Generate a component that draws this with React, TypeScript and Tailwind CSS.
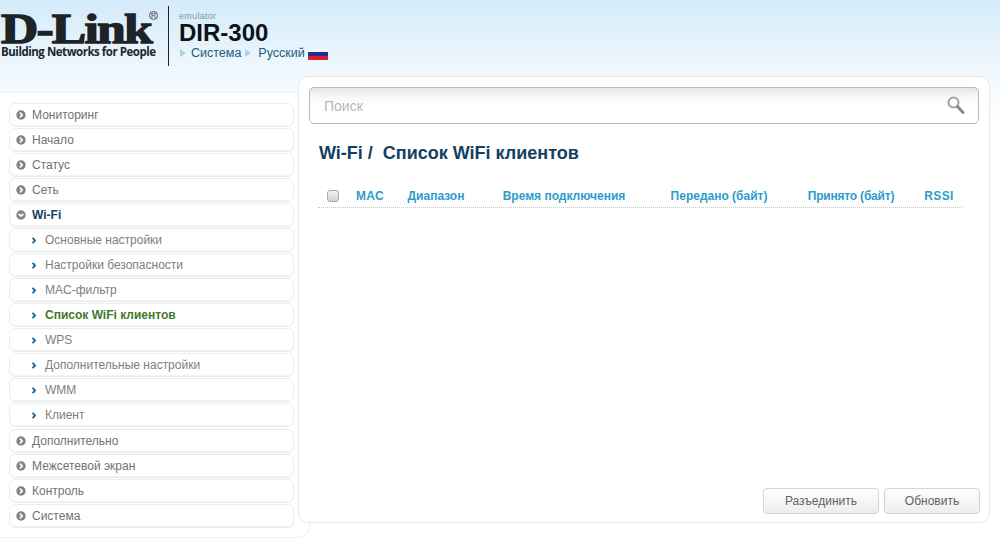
import React from "react";

const font = { fontFamily: '"Liberation Sans", Arial, sans-serif' };

function TopIcon({ open }: { open?: boolean }) {
  return (
    <svg width="10" height="10" viewBox="0 0 10 10" className="shrink-0">
      <circle cx="5" cy="5" r="4.7" fill="#7f8585" />
      <path d={open ? "M2.6 3.9 L5 6.2 L7.4 3.9" : "M3.9 2.6 L6.2 5 L3.9 7.4"} fill="none" stroke="#fff" strokeWidth="1.6" />
    </svg>
  );
}

function SubIcon() {
  return (
    <svg width="5" height="7" viewBox="0 0 5 7" className="shrink-0">
      <path d="M0.5 0.8 L3 3.5 L0.5 6.2" fill="none" stroke="#0d5f92" strokeWidth="1.8" />
    </svg>
  );
}

const rowBase =
  "flex h-[24px] w-[285px] shrink-0 items-center rounded-[6px] border border-[#ebeeee] bg-white text-[12px] shadow-[inset_0_-1px_0_#f3f4f4]";

function Top({ label, open, className = "" }: { label: string; open?: boolean; className?: string }) {
  return (
    <div className={`${rowBase} gap-[6px] pl-[6px] ${className}`}>
      <TopIcon open={open} />
      <span className={open ? "font-bold text-[#123f61]" : "text-[#6f7373]"}>{label}</span>
    </div>
  );
}

function Sub({ label, active }: { label: string; active?: boolean }) {
  return (
    <div className={`${rowBase} gap-[8px] pl-[22px]`}>
      <SubIcon />
      <span className={active ? "font-bold text-[#3f7a2a]" : "text-[#7b7f7f]"}>{label}</span>
    </div>
  );
}

function Th({ w, children }: { w: string; children: React.ReactNode }) {
  return <div className={`${w} shrink-0 text-center`}>{children}</div>;
}

export default function App() {
  return (
    <div
      className="h-[539px] w-[1000px] overflow-hidden bg-[linear-gradient(to_bottom,#d3ebf9_0px,#e4f2fb_40px,#f1f8fd_75px,#ffffff_125px)]"
      style={font}
    >
      <header className="flex h-[76px] items-start">
        <div className="ml-[1px] mt-[9px] w-[167px]">
          <div className="relative h-[36px] leading-[40px]">
            <span
              className="inline-block origin-left scale-x-[1.2] text-[43px] font-bold tracking-[-1.5px] text-[#1d2326] [-webkit-text-stroke:1.4px_#1d2326]"
              style={{ fontFamily: '"Liberation Serif", serif' }}
            >
              D-Link
            </span>
            <span className="absolute left-[148px] top-[2px] flex h-[9px] w-[9px] items-center justify-center rounded-full border border-[#555] text-[7px] leading-none text-[#444]">
              R
            </span>
          </div>
          <div
            className="whitespace-nowrap text-[11.5px] font-bold leading-[14px] text-[#20282c]"
            style={{ fontFamily: '"Open Sans", sans-serif', letterSpacing: "-0.47px" }}
          >
            Building Networks for People
          </div>
        </div>
        <div className="mt-[6px] h-[60px] w-px bg-[#222]" />
        <div className="ml-[10px] mt-[11px]">
          <div className="text-[9px] leading-[10px] tracking-[0.3px] text-[#7e97a8]">emulator</div>
          <div className="text-[24px] font-bold leading-[24px] text-[#0c1418]">DIR-300</div>
          <div className="mt-[1px] flex items-center text-[12.5px] leading-[14px] text-[#1d5a80]">
            <svg width="7" height="8" viewBox="0 0 7 8" className="ml-[1px] mr-[4px]"><path d="M0 0 L6 4 L0 8 Z" fill="#a9d3ec" /></svg>
            <span>Система</span>
            <svg width="7" height="8" viewBox="0 0 7 8" className="ml-[4px] mr-[6px]"><path d="M0 0 L6 4 L0 8 Z" fill="#a9d3ec" /></svg>
            <span>Русский</span>
            <div className="ml-[3px] mt-[2px] flex h-[11px] w-[20px] flex-col">
              <div className="h-[3px] bg-[#f4f4f4]" />
              <div className="h-[4px] bg-[#1f2f97]" />
              <div className="h-[4px] bg-[#d8202a]" />
            </div>
          </div>
        </div>
      </header>

      <div className="flex items-start">
        <aside className="mt-[16px] flex h-[446px] w-[310px] shrink-0 flex-col gap-px rounded-br-[12px] rounded-tr-[8px] border-b border-r border-t border-[#edf0f1] bg-white pl-[9px] pt-[10px]">
          <Top label="Мониторинг" />
          <Top label="Начало" />
          <Top label="Статус" />
          <Top label="Сеть" />
          <Top label="Wi-Fi" open />
          <Sub label="Основные настройки" />
          <Sub label="Настройки безопасности" />
          <Sub label="MAC-фильтр" />
          <Sub label="Список WiFi клиентов" active />
          <Sub label="WPS" />
          <Sub label="Дополнительные настройки" />
          <Sub label="WMM" />
          <Sub label="Клиент" />
          <Top label="Дополнительно" className="mt-px" />
          <Top label="Межсетевой экран" />
          <Top label="Контроль" />
          <Top label="Система" />
        </aside>

        <main className="relative -ml-[12px] flex h-[447px] w-[692px] shrink-0 flex-col rounded-[10px] border border-[#e6e9ea] bg-white pl-[10px] pr-[10px] pt-[10px]">
          <div className="flex h-[37px] w-[670px] items-center justify-between rounded-[5px] border border-[#b9bcbc] bg-[linear-gradient(to_bottom,#e4e5e5_0px,#f7f7f7_9px,#ffffff_16px)] pl-[14px] pr-[13px]">
            <span className="pt-[1px] text-[14px] text-[#b4b7b7]">Поиск</span>
            <svg width="18" height="19" viewBox="0 0 18 19">
              <circle cx="6.5" cy="6.5" r="5" fill="#fdfdfd" stroke="#9ea1a1" strokeWidth="2" />
              <path d="M10.5 10.5 L16 16.5" stroke="#85898a" strokeWidth="3" strokeLinecap="round" />
            </svg>
          </div>

          <h1 className="ml-[10px] mt-[18px] whitespace-pre text-[18px] font-bold leading-[22px] text-[#123f61]">
            Wi-Fi /  Список WiFi клиентов
          </h1>

          <div className="ml-[9px] mt-[21px] flex h-[23px] w-[644px] items-start border-b border-dotted border-[#c5c8c8] pt-[4px] text-[12px] font-bold leading-[14px] text-[#2f9ccb]">
            <div className="flex w-[29px] shrink-0 justify-center pt-[1px]">
              <div className="h-[12px] w-[12px] rounded-[3px] border border-[#a6a8a8] bg-[linear-gradient(to_bottom,#f1f1f1,#d2d3d3)]" />
            </div>
            <Th w="w-[45px] pl-[1px] tracking-[0.2px]">MAC</Th>
            <Th w="w-[88px]">Диапазон</Th>
            <Th w="w-[168px]">Время подключения</Th>
            <Th w="w-[142px]">Передано (байт)</Th>
            <Th w="w-[122px] tracking-[-0.2px]">Принято (байт)</Th>
            <Th w="w-[50px] pl-[4px] tracking-[0.4px]">RSSI</Th>
          </div>

          <div className="mt-auto mb-[8px] -mr-[1px] flex justify-end gap-[5px]">
            <button className="h-[26px] w-[116px] rounded-[4px] border border-[#d2d4d4] bg-[linear-gradient(to_bottom,#ffffff,#ededed)] text-[12px] text-[#5f6363]">
              Разъединить
            </button>
            <button className="h-[26px] w-[96px] rounded-[4px] border border-[#d2d4d4] bg-[linear-gradient(to_bottom,#ffffff,#ededed)] text-[12px] text-[#5f6363]">
              Обновить
            </button>
          </div>
        </main>
      </div>
    </div>
  );
}
